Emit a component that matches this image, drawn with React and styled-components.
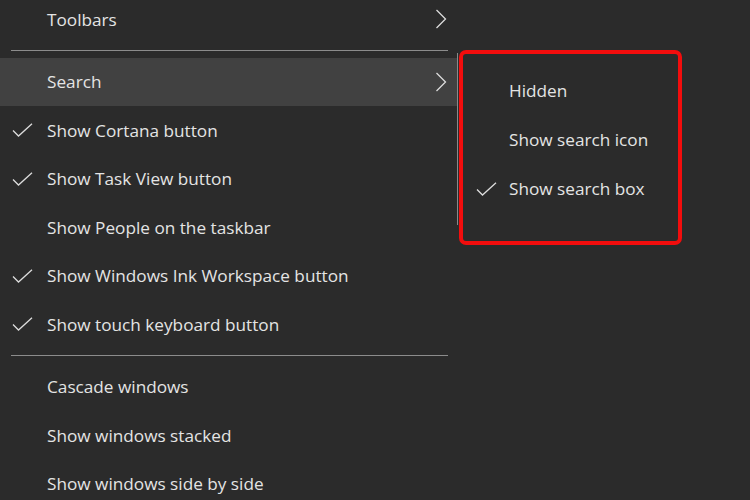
import React from 'react';
import styled, { createGlobalStyle } from 'styled-components';

const GlobalStyle = createGlobalStyle`
  html, body {
    margin: 0;
    padding: 0;
    background: #2b2b2b;
    overflow: hidden;
  }
  body {
    font-family: 'Open Sans', 'Noto Sans', sans-serif;
  }
`;

const Canvas = styled.div`
  position: relative;
  width: 750px;
  height: 500px;
  background: #2b2b2b;
  overflow: hidden;
`;

const Menu = styled.ul`
  list-style: none;
  margin: -5px 0 0 0;
  padding: 0;
  width: 457px;
  display: flex;
  flex-direction: column;
`;

const Item = styled.li`
  display: flex;
  align-items: center;
  height: ${({ $h }) => $h || 48.5}px;
  padding-right: 10px;
  background: ${({ $active }) => ($active ? '#414141' : 'transparent')};
  color: #e4e4e4;
  font-size: 17.2px;
  letter-spacing: 0;
`;

const CheckSlot = styled.span`
  width: ${({ $w }) => $w || 47}px;
  flex: none;
  display: flex;
  align-items: center;
  padding-left: ${({ $pad }) => $pad || 12}px;
  box-sizing: border-box;
`;

const Label = styled.span`
  flex: 1;
  white-space: nowrap;
`;

const Separator = styled.li`
  height: 14px;
  display: flex;
  align-items: center;
  padding: 0 9px 0 11px;
  &::after {
    content: '';
    flex: 1;
    height: 1px;
    background: #8c8c8c;
  }
`;

const SubMenu = styled.ul`
  position: absolute;
  left: 457px;
  top: 53px;
  width: 220px;
  height: 172px;
  margin: 0;
  padding: 13px 0 0 0;
  box-sizing: border-box;
  list-style: none;
  background: #2b2b2b;
  border-left: 1px solid #8a8a8a;
  display: flex;
  flex-direction: column;
`;

const Highlight = styled.div`
  position: absolute;
  left: 459px;
  top: 50px;
  width: 223px;
  height: 195px;
  box-sizing: border-box;
  border: 4px solid #f20d0d;
  border-radius: 7px;
  pointer-events: none;
`;

const Check = () => (
  <svg width="21" height="14" viewBox="0 0 21 14" fill="none">
    <path d="M1 7.5 L6.5 13 L20 0.8" stroke="#dcdcdc" strokeWidth="1.3" />
  </svg>
);

const Chevron = () => (
  <svg width="12" height="20" viewBox="0 0 12 20" fill="none">
    <path d="M1.5 1 L10.5 10 L1.5 19" stroke="#dcdcdc" strokeWidth="1.3" />
  </svg>
);

const Row = ({ label, checked, arrow, active }) => (
  <Item $active={active}>
    <CheckSlot>{checked && <Check />}</CheckSlot>
    <Label>{label}</Label>
    {arrow && <Chevron />}
  </Item>
);

const App = () => (
  <Canvas>
    <GlobalStyle />
    <Menu>
      <Row label="Toolbars" arrow />
      <Separator />
      <Row label="Search" arrow active />
      <Row label="Show Cortana button" checked />
      <Row label="Show Task View button" checked />
      <Row label="Show People on the taskbar" />
      <Row label="Show Windows Ink Workspace button" checked />
      <Row label="Show touch keyboard button" checked />
      <Separator />
      <Row label="Cascade windows" />
      <Row label="Show windows stacked" />
      <Row label="Show windows side by side" />
    </Menu>
    <SubMenu>
      <Item $h={49}>
        <CheckSlot $w={51} $pad={18} />
        <Label>Hidden</Label>
      </Item>
      <Item $h={49}>
        <CheckSlot $w={51} $pad={18} />
        <Label>Show search icon</Label>
      </Item>
      <Item $h={49}>
        <CheckSlot $w={51} $pad={18}>
          <Check />
        </CheckSlot>
        <Label>Show search box</Label>
      </Item>
    </SubMenu>
    <Highlight />
  </Canvas>
);

export default App;
